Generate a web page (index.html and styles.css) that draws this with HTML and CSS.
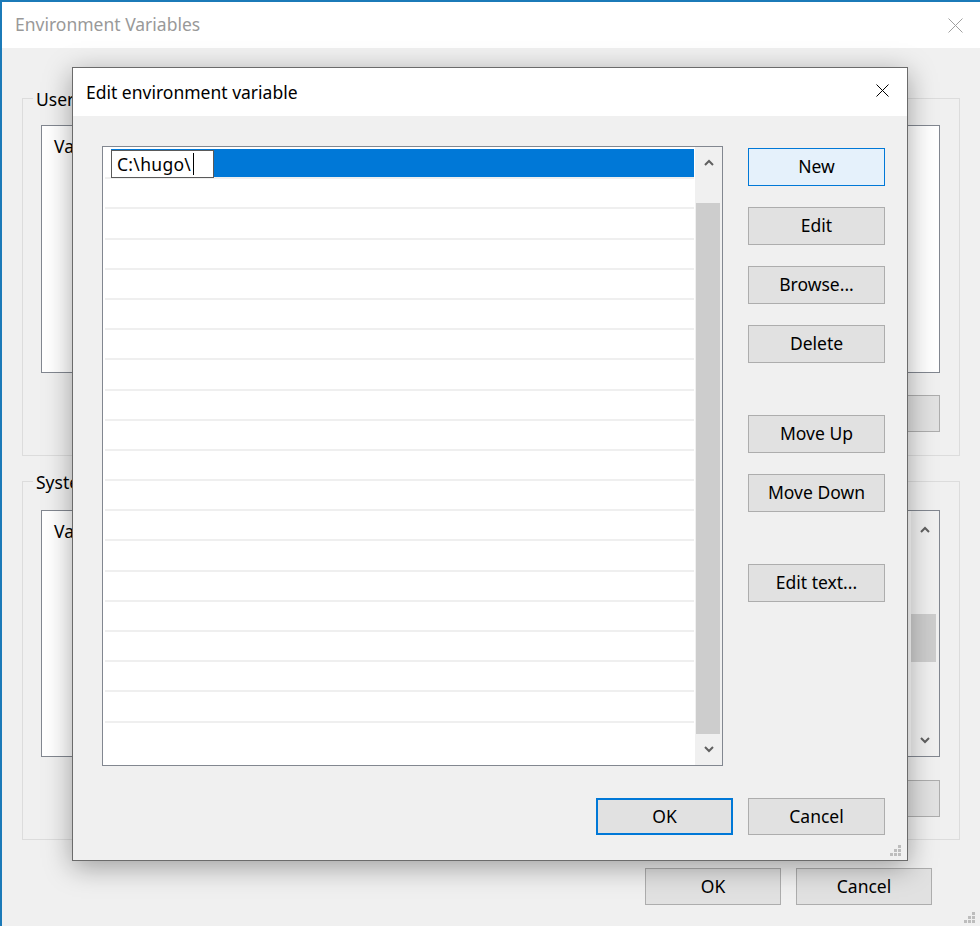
FILE: index.html
```html
<!DOCTYPE html>
<html lang="en">
<head>
    <meta charset="UTF-8"/>
    <title>Edit environment variable</title>
    <link rel="stylesheet" href="styles.css">
</head>
<body>

<!-- ========== BACKGROUND WINDOW: ENVIRONMENT VARIABLES ========== -->
<div class="window">
    <div class="titlebar">
        <span class="title">Environment Variables</span>
        <svg class="close-x close-inactive" width="15" height="15" viewBox="0 0 15 15">
            <path d="M0.5 0.5 L14.5 14.5 M14.5 0.5 L0.5 14.5"/>
        </svg>
    </div>

    <div class="window-body">
        <div class="group">
            <span class="caption">User variables</span>
            <div class="varlist varlist-user">
                <div class="varlist-head"><span class="col-name">Variable</span><span>Value</span></div>
            </div>
            <div class="group-buttons">
                <button class="btn">New...</button>
                <button class="btn">Edit...</button>
                <button class="btn">Delete</button>
            </div>
        </div>

        <div class="group group-system">
            <span class="caption">System variables</span>
            <div class="varlist varlist-system">
                <div class="varlist-content">
                    <div class="varlist-head"><span class="col-name">Variable</span><span>Value</span></div>
                </div>
                <div class="vscroll vscroll-small">
                    <div class="vscroll-btn vscroll-up-small">
                        <svg width="10" height="7" viewBox="0 0 10 7"><polyline points="1,6 5,2 9,6"/></svg>
                    </div>
                    <div class="vscroll-track vscroll-track-small"><div class="vscroll-thumb thumb-small"></div></div>
                    <div class="vscroll-btn vscroll-down-small">
                        <svg width="10" height="7" viewBox="0 0 10 7"><polyline points="1,1 5,5 9,1"/></svg>
                    </div>
                </div>
            </div>
            <div class="group-buttons">
                <button class="btn">New...</button>
                <button class="btn">Edit...</button>
                <button class="btn">Delete</button>
            </div>
        </div>

        <div class="window-footer">
            <button class="btn">OK</button>
            <button class="btn">Cancel</button>
        </div>
    </div>

    <svg class="grip grip-window" width="12" height="12" viewBox="0 0 12 12">
        <rect x="8" y="0" width="3" height="3"/>
        <rect x="4" y="4" width="3" height="3"/><rect x="8" y="4" width="3" height="3"/>
        <rect x="0" y="8" width="3" height="3"/><rect x="4" y="8" width="3" height="3"/><rect x="8" y="8" width="3" height="3"/>
    </svg>
</div>

<!-- ========== FRONT DIALOG: EDIT ENVIRONMENT VARIABLE ========== -->
<div class="dialog">
    <div class="dialog-title">
        <span>Edit environment variable</span>
        <svg class="close-x" width="13" height="13" viewBox="0 0 13 13">
            <path d="M0.5 0.5 L12.5 12.5 M12.5 0.5 L0.5 12.5"/>
        </svg>
    </div>

    <div class="dialog-body">
        <div class="dialog-main">
            <div class="pathlist">
                <div class="rows">
                    <div class="row row-selected">
                        <div class="row-fill">
                            <span class="row-edit">C:\hugo\<i class="caret"></i></span>
                        </div>
                    </div>
                    <div class="row"></div><div class="row"></div><div class="row"></div>
                    <div class="row"></div><div class="row"></div><div class="row"></div>
                    <div class="row"></div><div class="row"></div><div class="row"></div>
                    <div class="row"></div><div class="row"></div><div class="row"></div>
                    <div class="row"></div><div class="row"></div><div class="row"></div>
                    <div class="row"></div><div class="row"></div><div class="row"></div>
                </div>
                <div class="vscroll">
                    <div class="vscroll-btn vscroll-up">
                        <svg width="10" height="7" viewBox="0 0 10 7"><polyline points="1,6 5,2 9,6"/></svg>
                    </div>
                    <div class="vscroll-track"><div class="vscroll-thumb"></div></div>
                    <div class="vscroll-btn vscroll-down">
                        <svg width="10" height="7" viewBox="0 0 10 7"><polyline points="1,1 5,5 9,1"/></svg>
                    </div>
                </div>
            </div>

            <div class="side-buttons">
                <button class="btn side-btn btn-focus">New</button>
                <button class="btn side-btn">Edit</button>
                <button class="btn side-btn">Browse...</button>
                <button class="btn side-btn">Delete</button>
                <button class="btn side-btn side-gap">Move Up</button>
                <button class="btn side-btn">Move Down</button>
                <button class="btn side-btn side-gap">Edit text...</button>
            </div>
        </div>

        <div class="dialog-footer">
            <button class="btn btn-default">OK</button>
            <button class="btn">Cancel</button>
        </div>
    </div>

    <svg class="grip grip-dialog" width="12" height="12" viewBox="0 0 12 12">
        <rect x="8" y="0" width="3" height="3"/>
        <rect x="4" y="4" width="3" height="3"/><rect x="8" y="4" width="3" height="3"/>
        <rect x="0" y="8" width="3" height="3"/><rect x="4" y="8" width="3" height="3"/><rect x="8" y="8" width="3" height="3"/>
    </svg>
</div>

</body>
</html>
```

FILE: styles.css
```css
/* ========== GLOBAL STYLES ========== */
body {
    margin: 0;
    padding: 0;
    background-color: #f0f0f0;
    font-family: "Noto Sans", "Liberation Sans", sans-serif;
    font-size: 17.5px;
    color: #000000;
    overflow: hidden;
}

button {
    font-family: inherit;
    font-size: inherit;
    color: #000000;
    margin: 0;
}

.btn {
    width: 136px;
    height: 37px;
    padding: 0;
    background-color: #e1e1e1;
    border: 1px solid #adadad;
    box-sizing: border-box;
    line-height: 1;
}

.close-x path {
    stroke: #000000;
    stroke-width: 1;
    fill: none;
}
.close-inactive path {
    stroke: #a0a0a0;
}

.grip rect {
    fill: #bdbdbd;
}

/* ========== BACKGROUND WINDOW ========== */
.window {
    position: relative;
    width: 980px;
    height: 926px;
    border-top: 2px solid #1b7ab8;
    border-left: 2px solid #1b7ab8;
    box-sizing: border-box;
    background-color: #f0f0f0;
}

.titlebar {
    height: 46px;
    background-color: #ffffff;
    display: flex;
    align-items: center;
    justify-content: space-between;
    padding: 0 17px 0 13px;
}
.titlebar .title {
    color: #999999;
    margin-top: -2px;
}

.window-body {
    padding: 50px 20px 0 20px;
}

.group {
    display: flex;
    flex-direction: column;
    border: 1px solid #dcdcdc;
    padding: 0 19px 23px 18px;
}
.group-system {
    margin-top: 25px;
    padding-bottom: 22px;
}

.caption {
    align-self: flex-start;
    margin: -12px 0 0 -8px;
    padding: 0 3px;
    line-height: 24px;
    background-color: #f0f0f0;
}

.varlist {
    margin-top: 14px;
    height: 248px;
    background-color: #ffffff;
    border: 1px solid #828790;
    box-sizing: border-box;
}
.varlist-system {
    margin-top: 16px;
    height: 247px;
    display: flex;
}
.varlist-content {
    flex: 1;
}
.varlist-head {
    display: flex;
    padding: 7px 12px 0 12px;
    line-height: 26px;
}
.col-name {
    width: 260px;
}

.group-buttons {
    display: flex;
    justify-content: flex-end;
    gap: 15px;
    margin-top: 22px;
}
.group-system .group-buttons {
    margin-top: 23px;
}

.window-footer {
    display: flex;
    justify-content: flex-end;
    gap: 15px;
    margin-top: 28px;
    padding-right: 28px;
}

.grip-window {
    position: absolute;
    right: 4px;
    bottom: 2px;
}

/* ========== SCROLLBARS ========== */
.vscroll {
    width: 27px;
    display: flex;
    flex-direction: column;
    background-color: #f0f0f0;
}
.vscroll-btn {
    display: flex;
    align-items: center;
    justify-content: center;
}
.vscroll-btn polyline {
    fill: none;
    stroke: #606060;
    stroke-width: 2;
}
.vscroll-up {
    height: 30px;
}
.vscroll-down {
    height: 31px;
}
.vscroll-track {
    flex: 1;
    padding-top: 26px;
    display: flex;
    flex-direction: column;
}
.vscroll-thumb {
    flex: 1;
    margin: 0 2px 0 1px;
    background-color: #cdcdcd;
}

/* smaller one inside the system variables list */
.vscroll-small {
    width: 28px;
}
.vscroll-up-small {
    height: 36px;
}
.vscroll-down-small {
    height: 32px;
}
.vscroll-track-small {
    padding-top: 67px;
}
.thumb-small {
    flex: 0 0 48px;
    margin: 0 3px 0 0;
}

/* ========== FRONT DIALOG ========== */
.dialog {
    position: absolute;
    left: 72px;
    top: 67px;
    width: 836px;
    height: 794px;
    box-sizing: border-box;
    border: 1px solid #6b6b6b;
    background-color: #f0f0f0;
    box-shadow: 0 6px 26px rgba(0, 0, 0, 0.35);
}

.dialog-title {
    height: 48px;
    background-color: #ffffff;
    display: flex;
    align-items: center;
    justify-content: space-between;
    padding: 0 18px 0 13px;
}
.dialog-title span {
    margin-top: -1px;
}
.dialog-title .close-x {
    margin-top: -3px;
}

.dialog-body {
    padding: 30px 22px 0 29px;
}

.dialog-main {
    display: flex;
    align-items: flex-start;
    gap: 25px;
}

/* ========== PATH LIST ========== */
.pathlist {
    width: 621px;
    height: 620px;
    box-sizing: border-box;
    border: 1px solid #828790;
    background-color: #ffffff;
    display: flex;
}

.rows {
    flex: 1;
    padding: 2px 1px 0 2px;
}

.row {
    height: 30.2px;
    box-sizing: border-box;
    border-bottom: 2px solid #efefef;
}

.row-selected {
    padding-left: 6px;
}
.row-fill {
    height: 100%;
    background-color: #0078d7;
}
.row-edit {
    display: inline-flex;
    align-items: center;
    width: 103px;
    height: 28px;
    margin-top: 1px;
    padding-left: 5px;
    box-sizing: border-box;
    background-color: #ffffff;
    border: 1px solid #5a5a5a;
    white-space: pre;
    letter-spacing: 0.3px;
}
.caret {
    display: inline-block;
    width: 1px;
    height: 22px;
    margin-left: 2px;
    background-color: #000000;
}

/* ========== SIDE BUTTONS ========== */
.side-buttons {
    display: flex;
    flex-direction: column;
    padding-top: 2px;
}
.side-btn {
    width: 137px;
    height: 38px;
}
.side-btn + .side-btn {
    margin-top: 21px;
}
.side-btn.side-gap {
    margin-top: 52px;
}
.btn-focus {
    background-color: #e5f1fb;
    border-color: #0078d7;
}

.dialog-footer {
    display: flex;
    justify-content: flex-end;
    gap: 15px;
    margin-top: 32px;
}
.dialog-footer .btn {
    width: 137px;
}
.btn-default {
    border: 2px solid #0078d7;
}

.grip-dialog {
    position: absolute;
    right: 5px;
    bottom: 3px;
}
```
